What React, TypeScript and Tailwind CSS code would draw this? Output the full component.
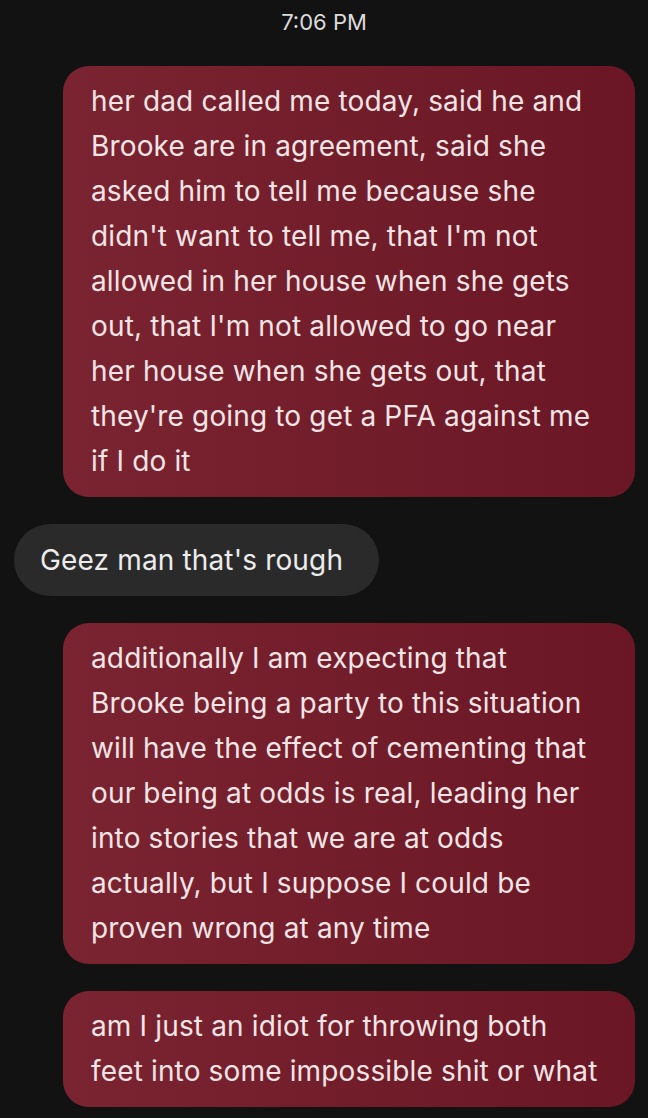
import React from "react";

const font = { fontFamily: "Inter, 'Open Sans', sans-serif" };

function Red({ lines }: { lines: string[] }) {
  return (
    <div className="flex justify-end pr-[13px]">
      <div className="w-[572px] rounded-[26px] bg-gradient-to-r from-[#7b2431] to-[#6a1624] pl-[28px] pr-[16px] py-[13px] text-[28px] tracking-[0.15px] leading-[45px] text-[#f3e4e6]">
        {lines.map((l, i) => (
          <div key={i} className="whitespace-nowrap">{l}</div>
        ))}
      </div>
    </div>
  );
}

export default function App() {
  return (
    <div className="min-h-[1118px] w-[648px] bg-[#121212] overflow-hidden" style={font}>
      <div className="pt-[9px] text-center text-[22px] leading-[26px] text-[#dcdcdc]">7:06 PM</div>
      <div className="mt-[31px] flex flex-col gap-[27px]">
        <Red
          lines={[
            "her dad called me today, said he and",
            "Brooke are in agreement, said she",
            "asked him to tell me because she",
            "didn't want to tell me, that I'm not",
            "allowed in her house when she gets",
            "out, that I'm not allowed to go near",
            "her house when she gets out, that",
            "they're going to get a PFA against me",
            "if I do it",
          ]}
        />
        <div className="flex pl-[14px]">
          <div className="h-[72px] w-[365px] rounded-full bg-[#2a2a2a] pl-[26px] flex items-center text-[28px] tracking-[0.15px] text-[#ececec] whitespace-nowrap">
            Geez man that's rough
          </div>
        </div>
        <Red
          lines={[
            "additionally I am expecting that",
            "Brooke being a party to this situation",
            "will have the effect of cementing that",
            "our being at odds is real, leading her",
            "into stories that we are at odds",
            "actually, but I suppose I could be",
            "proven wrong at any time",
          ]}
        />
        <Red
          lines={[
            "am I just an idiot for throwing both",
            "feet into some impossible shit or what",
          ]}
        />
      </div>
    </div>
  );
}
